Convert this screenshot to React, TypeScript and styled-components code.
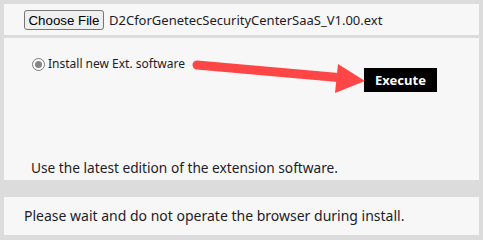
import styled, { createGlobalStyle } from "styled-components";

const Global = createGlobalStyle`
  html, body {
    margin: 0;
    padding: 0;
    background: #dcdcdc;
  }
  body {
    font-family: "Noto Sans", "Open Sans", sans-serif;
    color: #1c1c28;
  }
`;

const Page = styled.div`
  width: 483px;
  height: 240px;
  box-sizing: border-box;
  padding: 4px 4px 5px 4px;
  display: flex;
  flex-direction: column;
`;

const Panel = styled.div<{ $h: number; $gap: number }>`
  position: relative;
  background: #f7f7f7;
  height: ${(p) => p.$h}px;
  margin-top: ${(p) => p.$gap}px;
  box-sizing: border-box;
  display: flex;
  flex-direction: column;
`;

const FileRow = styled.div`
  display: flex;
  align-items: center;
  gap: 5px;
  padding: 6px 0 0 20px;
`;

const FileButton = styled.button`
  font-family: "Liberation Sans", Arial, sans-serif;
  font-size: 13.3px;
  color: #000;
  background: #efefef;
  border: 1px solid #767676;
  border-radius: 3px;
  height: 20px;
  width: 80px;
  padding: 0;
`;

const FileName = styled.span`
  font-size: 13px;
`;

const OptionRow = styled.div`
  display: flex;
  align-items: flex-start;
  padding: 19px 42px 0 28px;
`;

const RadioLabel = styled.label`
  display: flex;
  align-items: center;
  gap: 3px;
  font-size: 12px;
  line-height: 14px;
`;

const RadioMark = styled.span`
  width: 13px;
  height: 13px;
  box-sizing: border-box;
  border: 1px solid #7a7a7a;
  border-radius: 50%;
  background: #fff;
  display: flex;
  align-items: center;
  justify-content: center;
  &::after {
    content: "";
    width: 7px;
    height: 7px;
    border-radius: 50%;
    background: #858585;
  }
`;

const Execute = styled.button`
  margin: 11px 0 0 auto;
  width: 73px;
  height: 24px;
  background: #000;
  color: #fff;
  border: none;
  padding: 0;
  font-family: "Noto Sans", sans-serif;
  font-weight: 700;
  font-size: 13px;
`;

const Note = styled.div<{ $left: number; $size: number; $bottom: number }>`
  margin-top: auto;
  padding: 0 0 ${(p) => p.$bottom}px ${(p) => p.$left}px;
  font-size: ${(p) => p.$size}px;
  line-height: 18px;
`;

const Arrow = styled.svg`
  position: absolute;
  left: 0;
  top: 0;
  width: 475px;
  height: 142px;
  pointer-events: none;
`;

export default function App() {
  return (
    <>
      <Global />
      <Page>
        <Panel $h={31} $gap={0}>
          <FileRow>
            <FileButton>Choose File</FileButton>
            <FileName>D2CforGenetecSecurityCenterSaaS_V1.00.ext</FileName>
          </FileRow>
        </Panel>
        <Panel $h={142} $gap={3}>
          <OptionRow>
            <RadioLabel>
              <RadioMark />
              Install new Ext. software
            </RadioLabel>
            <Execute>Execute</Execute>
          </OptionRow>
          <Note $left={27} $size={13.7} $bottom={3}>
            Use the latest edition of the extension software.
          </Note>
          <Arrow viewBox="0 0 475 142">
            <line x1="193" y1="27" x2="340" y2="40" stroke="#ff4646" strokeWidth="9" strokeLinecap="round" />
            <polygon points="334,26 361,43 331,55" fill="#ff4646" />
          </Arrow>
        </Panel>
        <Panel $h={38} $gap={17}>
          <Note $left={20} $size={14} $bottom={10}>
            Please wait and do not operate the browser during install.
          </Note>
        </Panel>
      </Page>
    </>
  );
}
